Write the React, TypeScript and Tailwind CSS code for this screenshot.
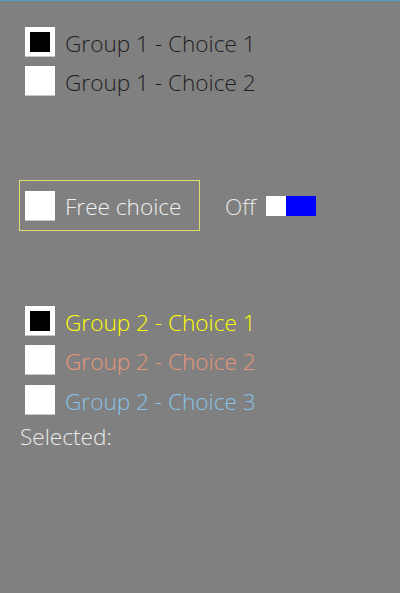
import React, { useState } from 'react';

type Choice = { label: string; color: string };

function Box({ checked }: { checked: boolean }) {
  return (
    <div className="w-[30px] h-[30px] bg-white border-b border-[#c8c8c8] flex items-center justify-center shrink-0">
      {checked ? <div className="w-[20px] h-[20px] bg-black" /> : null}
    </div>
  );
}

function Row({ label, checked, color }: { label: string; checked: boolean; color: string }) {
  return (
    <div className="flex items-center h-[30px] gap-[10px]">
      <Box checked={checked} />
      <span className={`pt-[4px] text-[22.6px] leading-none font-light ${color}`}>{label}</span>
    </div>
  );
}

export default function App() {
  const [g1] = useState(0);
  const [g2] = useState(0);
  const group2: Choice[] = [
    { label: 'Group 2 - Choice 1', color: 'text-[#ffff00]' },
    { label: 'Group 2 - Choice 2', color: 'text-[#e9967a]' },
    { label: 'Group 2 - Choice 3', color: 'text-[#87c3ea]' },
  ];

  return (
    <div
      className="w-[400px] h-[593px] bg-[#808080] border-t border-[#4a9fc7] overflow-hidden"
      style={{ fontFamily: '"Open Sans", "Noto Sans", sans-serif' }}
    >
      <div className="pt-[26px] pl-[25px] flex flex-col gap-[9px]">
        <Row label="Group 1 - Choice 1" checked={g1 === 0} color="text-[#1e1e1e]" />
        <Row label="Group 1 - Choice 2" checked={g1 === 1} color="text-[#1e1e1e]" />
      </div>

      <div className="mt-[84px] ml-[19px] flex items-center">
        <div className="w-[181px] h-[51px] border border-[#dede6e] pl-[5px] flex items-center">
          <Row label="Free choice" checked={false} color="text-[#f0f0f0]" />
        </div>
        <span className="ml-[25px] pt-[4px] text-[22.6px] leading-none font-light text-[#e6e6e6]">Off</span>
        <div className="ml-[10px] flex h-[20px]">
          <div className="w-[20px] bg-white" />
          <div className="w-[30px] bg-[#0000ff]" />
        </div>
      </div>

      <div className="mt-[75px] pl-[25px] flex flex-col">
        {group2.map((c, i) => (
          <div key={c.label} className={i === 0 ? '' : i === 1 ? 'mt-[9px]' : 'mt-[10px]'}>
            <Row label={c.label} checked={g2 === i} color={c.color} />
          </div>
        ))}
      </div>
      <div className="mt-[11px] pl-[20px] text-[22.6px] leading-none font-light text-[#ebebeb]">Selected:</div>
    </div>
  );
}
